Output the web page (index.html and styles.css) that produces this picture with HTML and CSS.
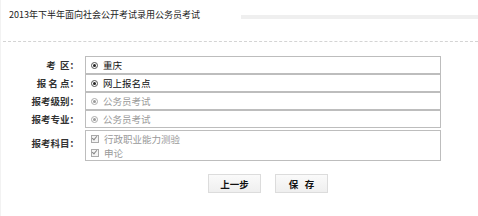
FILE: index.html
```html
<!DOCTYPE html>
<html lang="zh-CN">
  <head>
    <meta charset="UTF-8" />
    <title>报考信息</title>
    <link rel="stylesheet" href="styles.css">
  </head>
  <body>
    <div class="page">
      <div class="header">
        <h1 class="title">2013年下半年面向社会公开考试录用公务员考试</h1>
        <div class="title-bar"></div>
      </div>
      <div class="divider"></div>

      <div class="form">
        <div class="label">考&nbsp;&nbsp;区：</div>
        <div class="field">
          <span class="radio"></span>重庆
        </div>

        <div class="label">报&nbsp;名&nbsp;点：</div>
        <div class="field">
          <span class="radio"></span>网上报名点
        </div>

        <div class="label">报考级别：</div>
        <div class="field disabled">
          <span class="radio"></span>公务员考试
        </div>

        <div class="label">报考专业：</div>
        <div class="field disabled">
          <span class="radio"></span>公务员考试
        </div>

        <div class="label subjects-label">报考科目：</div>
        <div class="field subjects disabled">
          <div class="subject"><span class="check"></span>行政职业能力测验</div>
          <div class="subject"><span class="check"></span>申论</div>
        </div>
      </div>

      <div class="actions">
        <button class="btn">上一步</button>
        <button class="btn">保&nbsp;&nbsp;&nbsp;存</button>
      </div>
    </div>
  </body>
</html>
```

FILE: styles.css
```css
body {
  margin: 0;
  padding: 0;
  background: #fff;
  font-family: "Noto Sans CJK SC", "Liberation Sans", sans-serif;
  font-size: 9.5px;
  color: #222;
}
.page {
  width: 478px;
  height: 216px;
  border-left: 1px solid #f2f2f2;
  box-sizing: border-box;
}
.header {
  display: flex;
  align-items: center;
  padding: 8px 0 0 8px;
  height: 13px;
}
.title {
  margin: 0;
  font-size: 9px;
  font-weight: normal;
  line-height: 13px;
  color: #222;
  white-space: nowrap;
  width: 232px;
}
.title-bar {
  flex: 1;
  height: 4px;
  margin-top: 4px;
  background: #efefef;
}
.divider {
  margin: 20px 0 0 2px;
  border-top: 1px dashed #d4d4d4;
}

.form {
  display: grid;
  grid-template-columns: 84px 356px;
  margin-top: 14px;
}
.label {
  text-align: right;
  padding-right: 6px;
  font-weight: bold;
  color: #333;
  display: flex;
  align-items: center;
  justify-content: flex-end;
}
.field {
  height: 16px;
  border: 1px solid #bdbdbd;
  display: flex;
  align-items: center;
  padding-left: 5px;
  color: #111;
}
.field.disabled {
  color: #999;
}
.radio {
  width: 5px;
  height: 5px;
  border: 1px solid #555;
  border-radius: 50%;
  margin-right: 5px;
  position: relative;
}
.radio::after {
  content: "";
  position: absolute;
  left: 1px;
  top: 1px;
  width: 3px;
  height: 3px;
  border-radius: 50%;
  background: #222;
}
.disabled .radio {
  border-color: #aaa;
}
.disabled .radio::after {
  background: #999;
}

.subjects-label {
  margin-top: 2px;
  align-items: flex-start;
  padding-top: 6px;
}
.field.subjects {
  margin-top: 2px;
  height: 29px;
  flex-direction: column;
  align-items: flex-start;
  justify-content: center;
}
.subject {
  display: flex;
  align-items: center;
  height: 14px;
}
.check {
  width: 6px;
  height: 6px;
  border: 1px solid #aaa;
  margin-right: 5px;
  position: relative;
  background: #f4f4f4;
}
.check::after {
  content: "";
  position: absolute;
  left: 1px;
  top: -1px;
  width: 2px;
  height: 4px;
  border: solid #888;
  border-width: 0 1px 1px 0;
  transform: rotate(40deg);
}

.actions {
  display: flex;
  gap: 14px;
  padding-left: 207px;
  margin-top: 13px;
}
.btn {
  width: 53px;
  height: 19px;
  padding: 0;
  border: 1px solid #dcdcdc;
  background: linear-gradient(#fafafa, #efefef);
  font-family: "Noto Sans CJK SC", sans-serif;
  font-size: 9.5px;
  font-weight: bold;
  color: #111;
  cursor: pointer;
}
```
